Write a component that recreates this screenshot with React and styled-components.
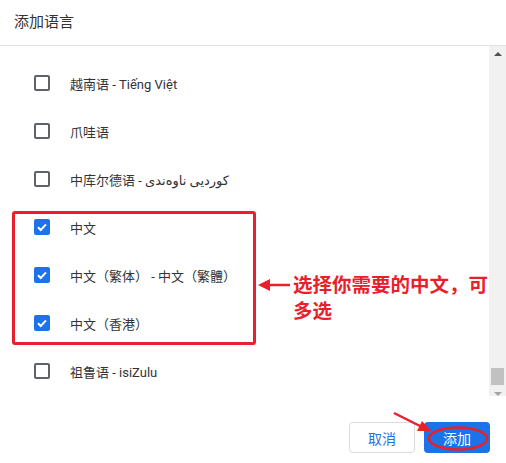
import React from 'react';
import styled, { createGlobalStyle } from 'styled-components';

const Global = createGlobalStyle`
  html, body { margin: 0; padding: 0; background: #fff; }
  body { font-family: Roboto, "Noto Sans CJK SC", "DejaVu Sans", sans-serif; }
`;

const Dialog = styled.div`
  position: relative;
  width: 506px;
  height: 463px;
  display: flex;
  flex-direction: column;
  background: #fff;
  overflow: hidden;
`;

const Header = styled.div`
  height: 46px;
  display: flex;
  align-items: center;
  padding: 0 0 4px 14px;
  box-sizing: border-box;
  border-bottom: 1px solid #e2e2e2;
  font-size: 15px;
  color: #333;
`;

const Body = styled.div`
  height: 350px;
  display: flex;
`;

const List = styled.div`
  flex: 1;
  padding-top: 13px;
`;

const Row = styled.div`
  height: 48px;
  display: flex;
  align-items: center;
  padding-left: 34px;
  font-size: 13px;
  color: #333;
`;

const Box = styled.span`
  width: 16px;
  height: 16px;
  box-sizing: border-box;
  border-radius: 2px;
  margin-right: 20px;
  display: flex;
  align-items: center;
  justify-content: center;
  border: ${p => (p.$checked ? 'none' : '2px solid #5f6368')};
  background: ${p => (p.$checked ? '#1a73e8' : 'transparent')};
`;

const Scrollbar = styled.div`
  width: 17px;
  background: #f1f1f1;
  display: flex;
  flex-direction: column;
  align-items: center;
`;

const Arrow = styled.div`
  width: 0;
  height: 0;
  border-left: 4px solid transparent;
  border-right: 4px solid transparent;
  ${p => (p.$down
    ? 'border-top: 4px solid #a3a3a3; margin-top: 7px;'
    : 'border-bottom: 4px solid #505050; margin-top: 6px;')}
`;

const Track = styled.div`
  flex: 1;
  width: 13px;
  display: flex;
  flex-direction: column;
  justify-content: flex-end;
`;

const Thumb = styled.div`
  height: 17px;
  background: #c1c1c1;
`;

const Footer = styled.div`
  flex: 1;
  display: flex;
  justify-content: flex-end;
  align-items: flex-start;
  gap: 9px;
  padding: 26px 16px 0 0;
`;

const Button = styled.button`
  width: 66px;
  height: 31px;
  border-radius: 4px;
  font-family: inherit;
  font-size: 14px;
  padding: 0;
  border: ${p => (p.$primary ? 'none' : '1px solid #dadce0')};
  background: ${p => (p.$primary ? '#1a73e8' : '#fff')};
  color: ${p => (p.$primary ? '#fff' : '#1a73e8')};
`;

const RedFrame = styled.div`
  position: absolute;
  left: 12px;
  top: 211px;
  width: 244px;
  height: 134px;
  box-sizing: border-box;
  border: 3px solid #e8202a;
  border-radius: 3px;
`;

const Note = styled.div`
  position: absolute;
  left: 293px;
  top: 273px;
  width: 200px;
  font-size: 19.5px;
  line-height: 26px;
  font-weight: bold;
  color: #e8202a;
`;

const Overlay = styled.svg`
  position: absolute;
  left: 0;
  top: 0;
  pointer-events: none;
`;

const Check = () => (
  <svg width="12" height="12" viewBox="0 0 12 12">
    <path d="M2 6.2 L4.8 9 L10 3.4" fill="none" stroke="#fff" strokeWidth="2" />
  </svg>
);

const rows = [
  ['越南语 - Tiếng Việt', false],
  ['爪哇语', false],
  ['中库尔德语 - کوردیی ناوەندی', false],
  ['中文', true],
  ['中文（繁体） - 中文（繁體）', true],
  ['中文（香港）', true],
  ['祖鲁语 - isiZulu', false],
];

export default function App() {
  return (
    <Dialog>
      <Global />
      <Header>添加语言</Header>
      <Body>
        <List>
          {rows.map(([label, checked]) => (
            <Row key={label}>
              <Box $checked={checked}>{checked && <Check />}</Box>
              <span>{label}</span>
            </Row>
          ))}
        </List>
        <Scrollbar>
          <Arrow />
          <Track><Thumb /></Track>
          <Arrow $down />
        </Scrollbar>
      </Body>
      <Footer>
        <Button>取消</Button>
        <Button $primary>添加</Button>
      </Footer>

      <RedFrame />
      <Note>选择你需要的中文，可多选</Note>
      <Overlay width="506" height="463">
        <line x1="268" y1="285" x2="290" y2="285" stroke="#e8202a" strokeWidth="2.5" />
        <path d="M258 285 L270 279 L270 291 Z" fill="#e8202a" />
        <line x1="394" y1="413" x2="420" y2="426" stroke="#e8202a" strokeWidth="2.5" />
        <path d="M431 431 L417 431 L422 421 Z" fill="#e8202a" />
        <ellipse cx="458" cy="438.5" rx="29" ry="11" fill="none" stroke="#e8202a" strokeWidth="2.5" />
      </Overlay>
    </Dialog>
  );
}
